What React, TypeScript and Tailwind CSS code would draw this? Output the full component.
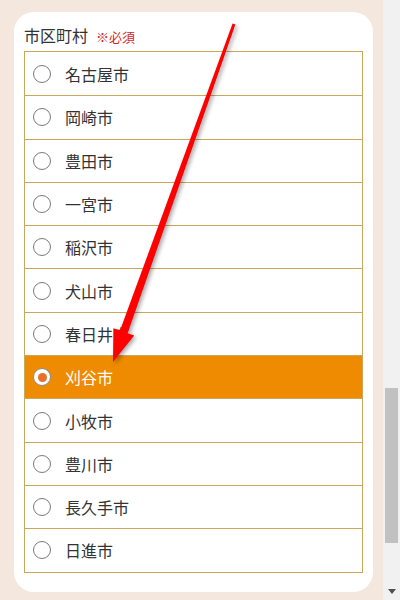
const CITIES = [
  '名古屋市',
  '岡崎市',
  '豊田市',
  '一宮市',
  '稲沢市',
  '犬山市',
  '春日井市',
  '刈谷市',
  '小牧市',
  '豊川市',
  '長久手市',
  '日進市',
];

const SELECTED = '刈谷市';

function CityRow({ name, selected, first }: { name: string; selected: boolean; first: boolean }) {
  return (
    <label
      className={
        'flex h-[43.3px] items-center ' +
        (first ? '' : 'border-t border-[#c9a85c] ') +
        (selected ? 'bg-[#ef8b00] text-white' : 'bg-white text-[#333]')
      }
    >
      <span
        className={
          'ml-[8px] flex h-[18px] w-[18px] items-center justify-center rounded-full border ' +
          (selected ? 'border-[#8a8a8a] bg-white' : 'border-[#7a7a7a] bg-white')
        }
      >
        {selected && <span className="h-[9px] w-[9px] rounded-full bg-[#e8702a]" />}
      </span>
      <span className="ml-[14px] text-[16px] leading-none">{name}</span>
    </label>
  );
}

export default function App() {
  return (
    <div
      className="relative flex h-[600px] w-[400px] overflow-hidden"
      style={{ fontFamily: '"Noto Sans CJK JP", "Noto Sans", sans-serif' }}
    >
      {/* page */}
      <div className="w-[383px] bg-[#f4e7de] pl-[14px] pt-[12px]">
        <div className="h-[580px] w-[359px] rounded-[20px] bg-white px-[10px] pt-[12px]">
          <div className="mb-[3px] flex items-baseline leading-[22px]">
            <span className="text-[16px] text-[#333]">市区町村</span>
            <span className="ml-[8px] text-[13px] text-[#d22a2a]">※必須</span>
          </div>
          <div className="w-[339px] border border-[#c9a85c]">
            {CITIES.map((c, i) => (
              <CityRow key={c} name={c} selected={c === SELECTED} first={i === 0} />
            ))}
          </div>
        </div>
      </div>

      {/* scrollbar */}
      <div className="flex w-[17px] flex-col bg-[#f1f1f1]">
        <div className="h-[388px]" />
        <div className="mx-[2px] h-[155px] bg-[#c1c1c1]" />
        <div className="flex-1" />
        <div className="flex h-[17px] items-center justify-center">
          <svg width="8" height="5" viewBox="0 0 8 5">
            <path d="M0 0 H8 L4 5 Z" fill="#505050" />
          </svg>
        </div>
      </div>

      {/* annotation arrow */}
      <svg
        className="pointer-events-none absolute left-0 top-0 drop-shadow-[2px_2px_2px_rgba(0,0,0,0.35)]"
        width="400"
        height="600"
        viewBox="0 0 400 600"
      >
        <polygon
          points="235.4,24.5 127.6,333.2 134.2,335.6 113,362 113.4,328.2 120,330.6 232.6,23.5"
          fill="#ff0000"
        />
      </svg>
    </div>
  );
}
